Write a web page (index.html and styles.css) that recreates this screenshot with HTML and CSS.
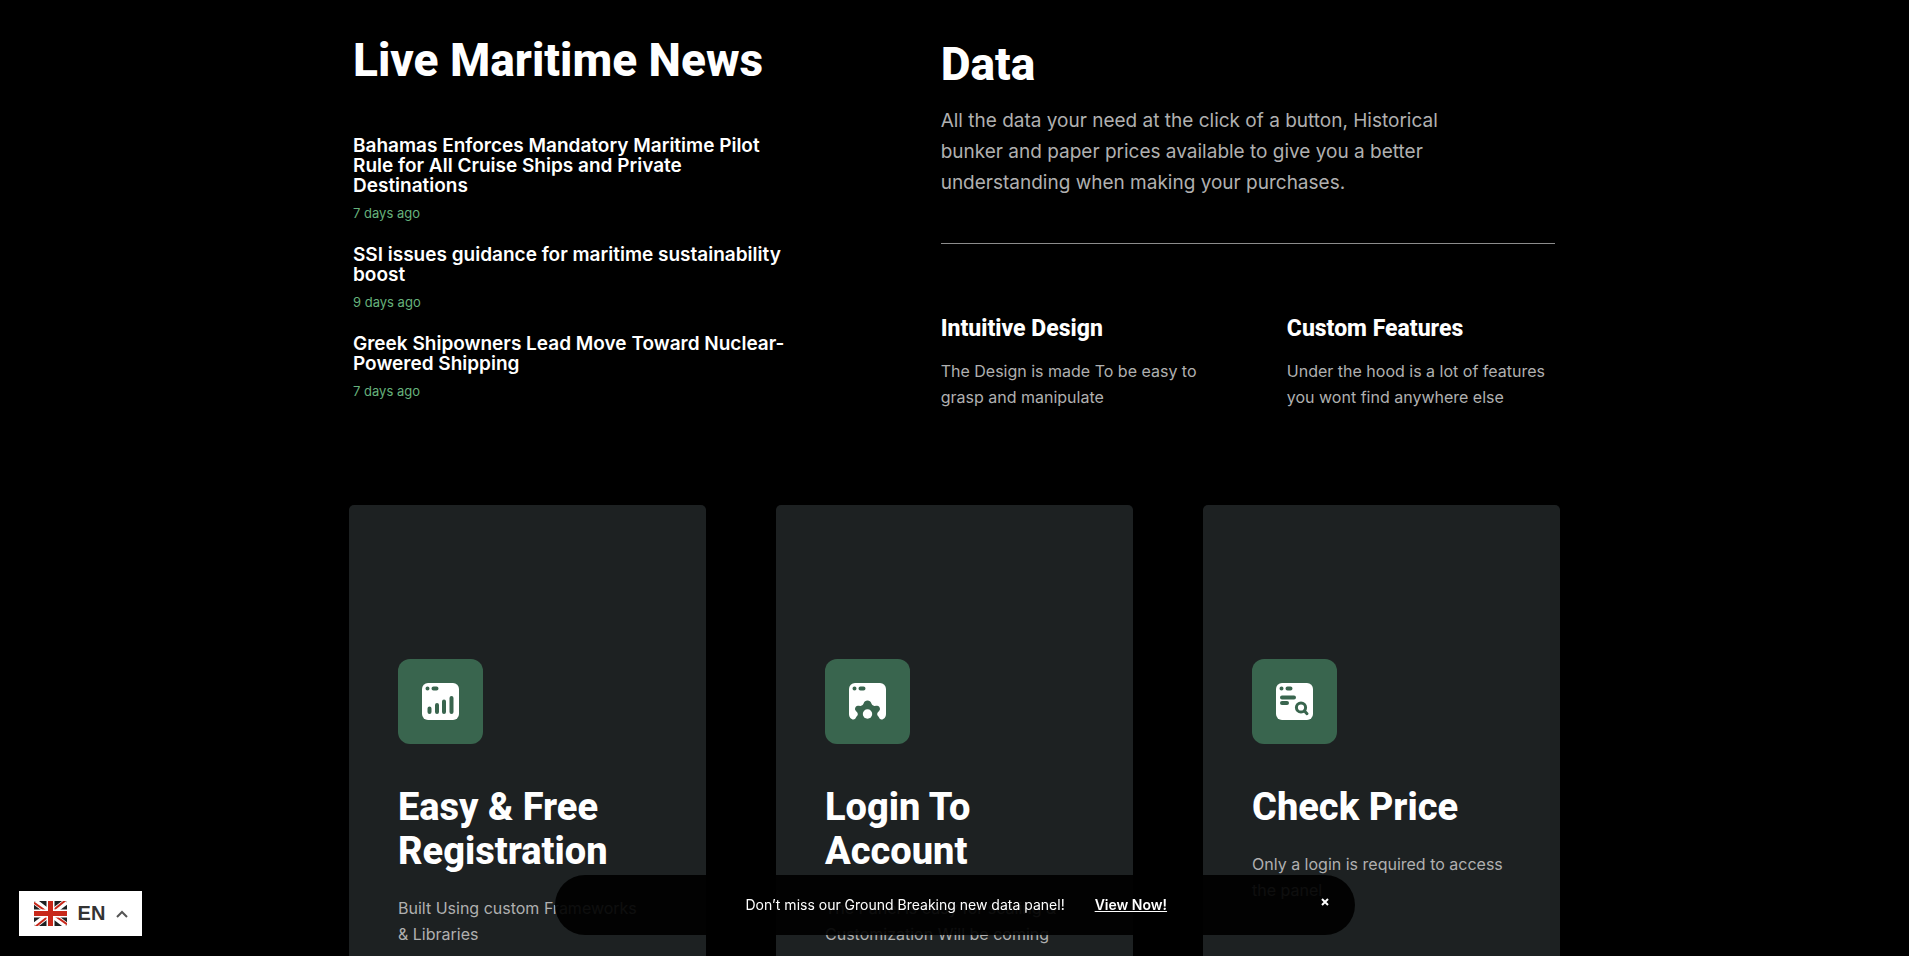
FILE: index.html
```html
<!DOCTYPE html>
<html lang="en">
<head>
  <meta charset="UTF-8">
  <title>Live Maritime News</title>
  <link rel="stylesheet" href="styles.css">
</head>
<body>

<main class="container">
  <div class="intro">
    <section class="news">
      <h2>Live Maritime News</h2>
      <ul class="news-list">
        <li>
          <h3>Bahamas Enforces Mandatory Maritime Pilot Rule for All Cruise Ships and Private Destinations</h3>
          <time>7 days ago</time>
        </li>
        <li>
          <h3>SSI issues guidance for maritime sustainability boost</h3>
          <time>9 days ago</time>
        </li>
        <li>
          <h3>Greek Shipowners Lead Move Toward Nuclear-Powered Shipping</h3>
          <time>7 days ago</time>
        </li>
      </ul>
    </section>

    <section class="data">
      <h2>Data</h2>
      <p class="lead">All the data your need at the click of a button, Historical bunker and paper prices available to give you a better understanding when making your purchases.</p>
      <hr>
      <div class="features">
        <div>
          <h4>Intuitive Design</h4>
          <p>The Design is made To be easy to grasp and manipulate</p>
        </div>
        <div>
          <h4>Custom Features</h4>
          <p>Under the hood is a lot of features you wont find anywhere else</p>
        </div>
      </div>
    </section>
  </div>

  <div class="cards">
    <article class="card">
      <div class="card-icon">
        <svg width="37" height="37" viewBox="0 0 37 37">
          <rect width="37" height="37" rx="6" fill="#fff"/>
          <g fill="none" stroke="#39654e" stroke-width="4" stroke-linecap="round">
            <path d="M5.500 5.500h.01M11.500 5.500h3"/>
            <path d="M7.500 25.500v3.500M15 22v7M22 18.500V29M29.500 15v14"/>
          </g>
        </svg>
      </div>
      <h3>Easy &amp; Free Registration</h3>
      <p>Built Using custom Frameworks &amp;&nbsp;Libraries</p>
    </article>

    <article class="card">
      <div class="card-icon">
        <svg width="37" height="37" viewBox="0 0 37 37">
          <path fill="#fff" d="M6 0h25a6 6 0 0 1 6 6v25c0 3-2 5.500-4.500 5.500-1 0-2-1-2.600-2.300-.6-1.200-1.700-1.500-1.700-3s1.200-2.200 2.200-3.600c1-1.300.6-3-.4-4.200-1.200-1.300-2.800-.4-4.600-.5-1.600-.2-2.800-1.300-3.200-2.900-.4-1.500-1.800-2.600-3.700-2.600s-3.300 1.100-3.700 2.600c-.4 1.600-1.600 2.700-3.200 2.900-1.800.1-3.400-.8-4.600.5-1 1.200-1.400 2.900-.4 4.200 1 1.400 2.200 2.100 2.200 3.600s-1.100 1.800-1.700 3C6.500 35.500 5.500 36.500 4.500 36.500 2 36.500 0 34 0 31V6a6 6 0 0 1 6-6z"/>
          <circle cx="18.500" cy="31" r="4.700" fill="#fff"/>
          <path fill="none" stroke="#39654e" stroke-width="4" stroke-linecap="round" d="M5.500 5.500h.01M11.500 5.500h3"/>
        </svg>
      </div>
      <h3>Login To Account</h3>
      <p>The Panel is easy for scaling &amp; Customization Will be coming</p>
    </article>

    <article class="card">
      <div class="card-icon">
        <svg width="37" height="37" viewBox="0 0 37 37">
          <rect width="37" height="37" rx="6" fill="#fff"/>
          <g fill="none" stroke="#39654e" stroke-width="4" stroke-linecap="round">
            <path d="M5.500 5.500h.01M11.500 5.500h3"/>
            <path d="M6 14.500h12M6 20h5"/>
            <circle cx="25" cy="24.500" r="4.600" stroke-width="3"/>
            <path stroke-width="3" d="M28.500 28l2.500 2.700"/>
          </g>
        </svg>
      </div>
      <h3>Check Price</h3>
      <p>Only a login is required to access the panel</p>
    </article>
  </div>
</main>

<div class="toast">
  <span>Don’t miss our Ground Breaking new data panel!</span>
  <a href="#">View Now!</a>
  <button type="button" class="toast-close" aria-label="Close">
    <svg width="8" height="8" viewBox="0 0 8 8"><path d="M1 1l6 6M7 1L1 7" stroke="#fff" stroke-width="2"/></svg>
  </button>
</div>

<button type="button" class="lang">
  <svg width="33" height="25" viewBox="0 0 33 25">
    <clipPath id="flag"><rect width="33" height="25" rx="2"/></clipPath>
    <g clip-path="url(#flag)">
      <rect width="33" height="25" fill="#1d2122"/>
      <path d="M0 0l33 25M33 0L0 25" stroke="#fff" stroke-width="6"/>
      <path d="M-1 1l17 12M34 24L17 12M32-1L17 11M1 26l15-12" stroke="#c8281a" stroke-width="2"/>
      <path d="M16.500 0v25M0 12.500h33" stroke="#fff" stroke-width="8"/>
      <path d="M16.500 0v25M0 12.500h33" stroke="#c8281a" stroke-width="5"/>
    </g>
  </svg>
  <span>EN</span>
  <svg width="12" height="8" viewBox="0 0 12 8"><path d="M1 7l5-5 5 5" fill="none" stroke="#555" stroke-width="2"/></svg>
</button>

</body>
</html>
```
FILE: styles.css
```css
* {
  margin: 0;
  padding: 0;
  box-sizing: border-box;
}

body {
  background: #000;
  color: #fff;
  font-family: Inter, "Liberation Sans", sans-serif;
  font-size: 16px;
  line-height: 26px;
}

h2,
h4,
.card h3 {
  font-family: Roboto, "Liberation Sans", sans-serif;
  font-weight: 800;
}

h2 {
  font-size: 46px;
  line-height: 56px;
}

p {
  color: #b0b0b0;
}

.container {
  max-width: 1211px;
  margin: 0 auto;
  padding-top: 32px;
}

.intro {
  display: grid;
  grid-template-columns: 22fr 23fr;
  padding: 0 5px 0 4px;
}

.news-list {
  display: flex;
  flex-direction: column;
  gap: 22px;
  max-width: 436px;
  margin-top: 48px;
  list-style: none;
}

.news-list h3 {
  font-size: 19px;
  font-weight: 600;
  line-height: 20px;
}

.news-list time {
  display: block;
  margin-top: 7px;
  color: #66b27c;
  font-size: 13px;
  line-height: 20px;
}

.data {
  padding-top: 4px;
}

.lead {
  max-width: 530px;
  margin-top: 13px;
  font-size: 19px;
  line-height: 31px;
}

hr {
  margin-top: 45px;
  border: 0;
  border-top: 1px solid #8c8c8c;
}

.features {
  display: grid;
  grid-template-columns: 1fr 1fr;
  gap: 78px;
  margin-top: 70px;
}

.features h4 {
  margin-bottom: 14px;
  font-size: 23px;
  line-height: 30px;
}

.cards {
  display: grid;
  grid-template-columns: repeat(3, 1fr);
  gap: 70px;
  margin-top: 95px;
}

.card {
  min-height: 540px;
  padding: 154px 40px 60px 49px;
  border-radius: 5px;
  background: #1d2122;
}

.card-icon {
  display: flex;
  align-items: center;
  justify-content: center;
  width: 85px;
  height: 85px;
  border-radius: 12px;
  background: #39654e;
}

.card h3 {
  margin: 41px 0 22px;
  font-size: 38px;
  line-height: 44px;
}

/* bar over the bottom of the page */
.toast {
  position: fixed;
  bottom: 21px;
  left: 50%;
  display: flex;
  align-items: center;
  gap: 30px;
  width: 800px;
  height: 60px;
  padding: 0 26px 0 191px;
  transform: translateX(-50%);
  border-radius: 30px;
  background: rgba(0, 0, 0, .92);
  font-size: 14px;
}

.toast a {
  color: #fff;
  font-weight: 600;
}

.toast-close {
  display: flex;
  margin-left: auto;
  padding: 0 0 6px;
  border: 0;
  background: none;
  cursor: pointer;
}

.lang {
  position: fixed;
  bottom: 20px;
  left: 19px;
  display: flex;
  align-items: center;
  justify-content: space-between;
  width: 123px;
  height: 45px;
  padding: 0 14px 0 15px;
  border: 0;
  background: #fff;
  color: #333;
  font: 700 20px "Liberation Sans", sans-serif;
  cursor: pointer;
}
```
